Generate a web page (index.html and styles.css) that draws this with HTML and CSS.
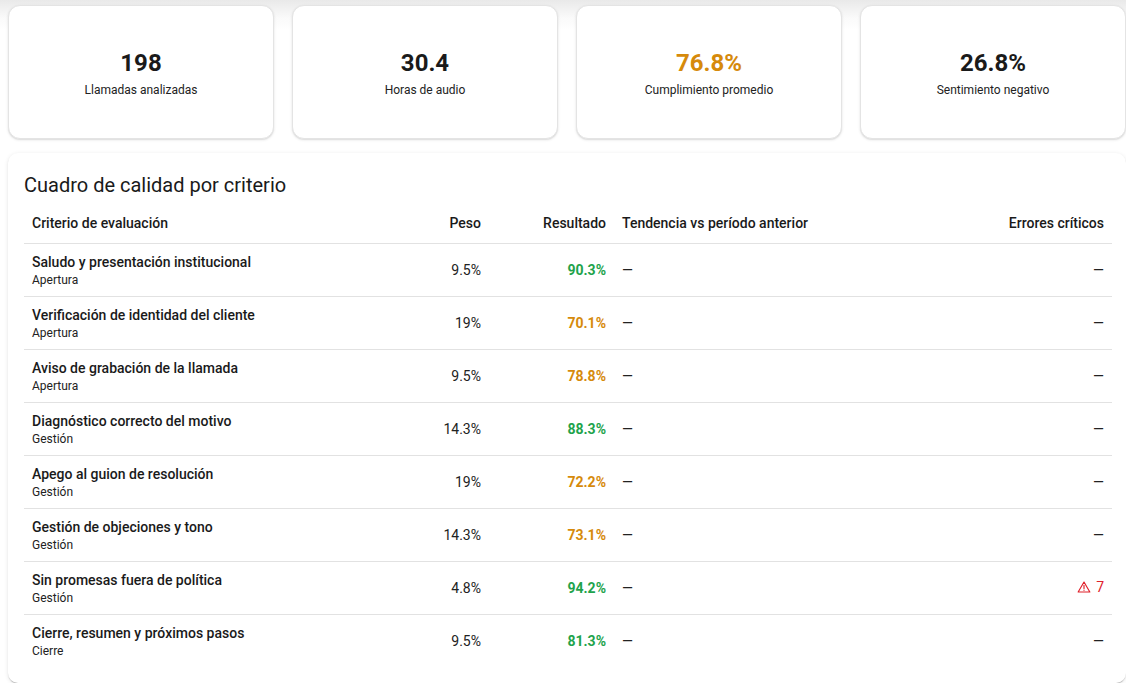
FILE: index.html
```html
<!DOCTYPE html>
<html lang="es">
<head>
<meta charset="utf-8">
<title>Cuadro de calidad</title>
<link rel="stylesheet" href="styles.css">
</head>
<body>
<div class="page">
  <section class="stats">
    <div class="stat"><div class="stat-value">198</div><div class="stat-label">Llamadas analizadas</div></div>
    <div class="stat"><div class="stat-value">30.4</div><div class="stat-label">Horas de audio</div></div>
    <div class="stat"><div class="stat-value amber">76.8%</div><div class="stat-label">Cumplimiento promedio</div></div>
    <div class="stat"><div class="stat-value">26.8%</div><div class="stat-label">Sentimiento negativo</div></div>
  </section>

  <section class="panel">
    <h2 class="panel-title">Cuadro de calidad por criterio</h2>
    <table class="qtable">
      <colgroup>
        <col class="c-name"><col class="c-peso"><col class="c-res"><col class="c-trend"><col class="c-err">
      </colgroup>
      <thead>
        <tr>
          <th class="left">Criterio de evaluación</th>
          <th class="right">Peso</th>
          <th class="right">Resultado</th>
          <th class="left">Tendencia vs período anterior</th>
          <th class="right">Errores críticos</th>
        </tr>
      </thead>
      <tbody>
        <tr>
          <td><div class="name">Saludo y presentación institucional</div><div class="cat">Apertura</div></td>
          <td class="right">9.5%</td>
          <td class="right res green">90.3%</td>
          <td class="left">—</td>
          <td class="right">—</td>
        </tr>
        <tr>
          <td><div class="name">Verificación de identidad del cliente</div><div class="cat">Apertura</div></td>
          <td class="right">19%</td>
          <td class="right res amber">70.1%</td>
          <td class="left">—</td>
          <td class="right">—</td>
        </tr>
        <tr>
          <td><div class="name">Aviso de grabación de la llamada</div><div class="cat">Apertura</div></td>
          <td class="right">9.5%</td>
          <td class="right res amber">78.8%</td>
          <td class="left">—</td>
          <td class="right">—</td>
        </tr>
        <tr>
          <td><div class="name">Diagnóstico correcto del motivo</div><div class="cat">Gestión</div></td>
          <td class="right">14.3%</td>
          <td class="right res green">88.3%</td>
          <td class="left">—</td>
          <td class="right">—</td>
        </tr>
        <tr>
          <td><div class="name">Apego al guion de resolución</div><div class="cat">Gestión</div></td>
          <td class="right">19%</td>
          <td class="right res amber">72.2%</td>
          <td class="left">—</td>
          <td class="right">—</td>
        </tr>
        <tr>
          <td><div class="name">Gestión de objeciones y tono</div><div class="cat">Gestión</div></td>
          <td class="right">14.3%</td>
          <td class="right res amber">73.1%</td>
          <td class="left">—</td>
          <td class="right">—</td>
        </tr>
        <tr>
          <td><div class="name">Sin promesas fuera de política</div><div class="cat">Gestión</div></td>
          <td class="right">4.8%</td>
          <td class="right res green">94.2%</td>
          <td class="left">—</td>
          <td class="right"><span class="crit"><svg class="warn" viewBox="0 0 24 24" width="14" height="14" aria-hidden="true"><path d="M12 3.5 L22 20.5 H2 Z" fill="none" stroke="currentColor" stroke-width="2" stroke-linejoin="round"/><path d="M12 9.5 V14.5" stroke="currentColor" stroke-width="2" stroke-linecap="round"/><circle cx="12" cy="17.4" r="1.1" fill="currentColor"/></svg>7</span></td>
        </tr>
        <tr>
          <td><div class="name">Cierre, resumen y próximos pasos</div><div class="cat">Cierre</div></td>
          <td class="right">9.5%</td>
          <td class="right res green">81.3%</td>
          <td class="left">—</td>
          <td class="right">—</td>
        </tr>
      </tbody>
    </table>
  </section>
</div>
</body>
</html>
```
FILE: styles.css
```css
* { box-sizing: border-box; }
html, body { margin: 0; padding: 0; }
body {
  font-family: Roboto, "Liberation Sans", Arial, sans-serif;
  color: #1c1c1c;
  background: #fff linear-gradient(#e9e9e9 0, #fafafa 18px, #fff 30px) no-repeat;
  overflow: hidden;
}
.page {
  width: 1126px;
  padding: 5px 0 0 8px;
}
.stats {
  display: grid;
  grid-template-columns: repeat(4, 266px);
  column-gap: 18px;
}
.stat {
  height: 134px;
  padding-top: 3px;
  background: #fff;
  border: 1px solid #e4e4e4;
  border-radius: 12px;
  box-shadow: 0 1px 3px rgba(0,0,0,0.10), 0 1px 1px rgba(0,0,0,0.06);
  display: flex;
  flex-direction: column;
  align-items: center;
  justify-content: center;
}
.stat-value {
  font-size: 24px;
  line-height: 28px;
  font-weight: 700;
  color: #1a1a1a;
}
.stat-label {
  margin-top: 5px;
  font-size: 12px;
  line-height: 16px;
  color: #222;
}
.amber { color: #d68a0b; }
.green { color: #1ea34c; }

.panel {
  margin-top: 14px;
  width: 1118px;
  background: #fff;
  border-radius: 10px;
  box-shadow: 0 2px 1px -1px rgba(0,0,0,0.14), 0 1px 1px 0 rgba(0,0,0,0.10), 0 1px 4px 0 rgba(0,0,0,0.10);
  padding: 16px 14px 16px 16px;
}
.panel-title {
  margin: 0 0 1px;
  font-size: 20px;
  line-height: 32px;
  font-weight: 400;
  color: #1a1a1a;
}
.qtable {
  width: 100%;
  border-collapse: collapse;
  table-layout: fixed;
  font-size: 14px;
}
.c-name { width: 376px; }
.c-peso { width: 89px; }
.c-res { width: 125px; }
.c-trend { width: 286px; }
.c-err { width: auto; }
.qtable th {
  font-weight: 500;
  line-height: 20px;
  padding: 11px 8px 10px;
  border-bottom: 1px solid #e2e2e2;
  color: #1a1a1a;
}
.qtable td {
  padding: 8px;
  vertical-align: middle;
  border-bottom: 1px solid #e2e2e2;
  line-height: 20px;
  color: #222;
}
.qtable tbody tr:last-child td { border-bottom: none; }
.left { text-align: left; }
.right { text-align: right; }
.name {
  font-weight: 500;
  line-height: 20px;
  color: #1a1a1a;
}
.cat {
  font-size: 12px;
  line-height: 16px;
  color: #222;
}
.qtable td.res { font-weight: 700; }
.qtable td.green { color: #1ea34c; }
.qtable td.amber { color: #d68a0b; }
.crit {
  display: inline-flex;
  align-items: center;
  gap: 5px;
  color: #e0202a;
}
.warn { display: block; }
```
